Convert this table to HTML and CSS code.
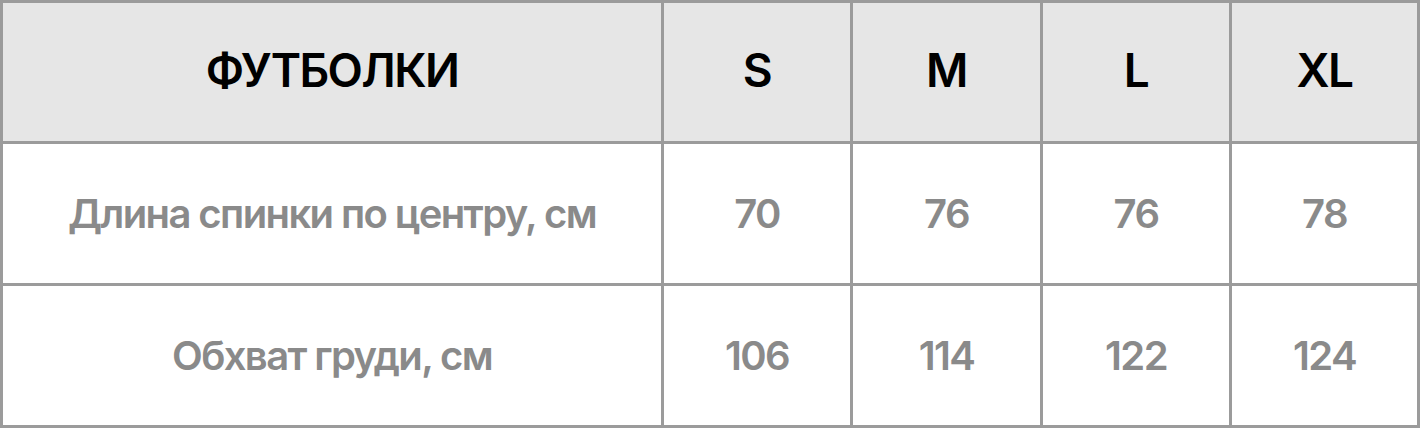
FILE: index.html
```html
<!DOCTYPE html>
<html lang="ru">
<head>
<meta charset="utf-8">
<link rel="stylesheet" href="styles.css">
</head>
<body>
<div class="sizes">
  <div class="cell head">ФУТБОЛКИ</div>
  <div class="cell head">S</div>
  <div class="cell head">M</div>
  <div class="cell head">L</div>
  <div class="cell head">XL</div>

  <div class="cell">Длина спинки по центру, см</div>
  <div class="cell">70</div>
  <div class="cell">76</div>
  <div class="cell">76</div>
  <div class="cell">78</div>

  <div class="cell">Обхват груди, см</div>
  <div class="cell">106</div>
  <div class="cell">114</div>
  <div class="cell">122</div>
  <div class="cell">124</div>
</div>
</body>
</html>
```

FILE: styles.css
```css
html, body {
  margin: 0;
  padding: 0;
  background: #ffffff;
}

.sizes {
  width: 1420px;
  height: 428px;
  box-sizing: border-box;
  display: grid;
  grid-template-columns: 658px 186px 187px 186px 185px;
  grid-template-rows: 138px 139px 139px;
  gap: 3px;
  padding: 3px;
  background: #9b9b9b;
  font-family: Inter, "Noto Sans", sans-serif;
}

.cell {
  display: flex;
  align-items: center;
  justify-content: center;
  background: #ffffff;
  color: #8a8a8a;
  font-size: 40px;
  font-weight: 600;
  letter-spacing: -1.6px;
}

.head {
  background: #e6e6e6;
  color: #000000;
  font-size: 46px;
  font-weight: 600;
  letter-spacing: -1.6px;
  padding-bottom: 5px;
  box-sizing: border-box;
}
```
